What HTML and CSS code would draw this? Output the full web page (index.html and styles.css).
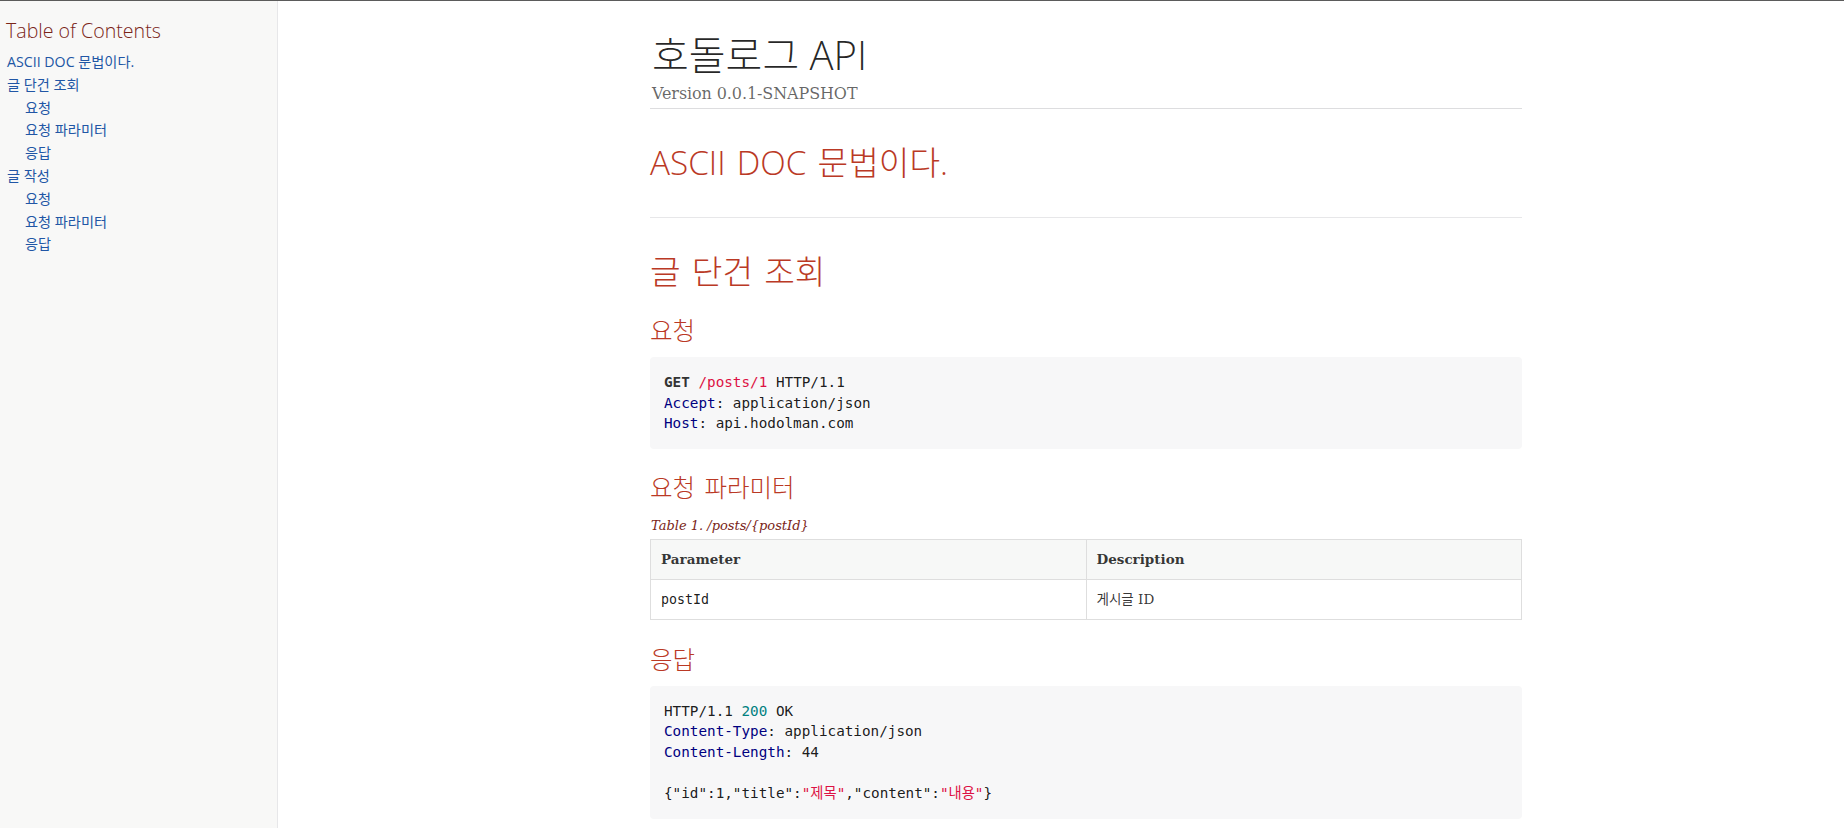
FILE: index.html
```html
<!DOCTYPE html>
<html lang="ko">
<head>
<meta charset="utf-8">
<title>호돌로그 API</title>
<link rel="stylesheet" href="styles.css">
</head>
<body>
<div class="page">
  <nav class="toc">
    <div class="toc-title">Table of Contents</div>
    <ul class="toc-list">
      <li><a href="#a">ASCII DOC 문법이다.</a></li>
      <li><a href="#b">글 단건 조회</a>
        <ul class="toc-sub">
          <li><a href="#b1">요청</a></li>
          <li><a href="#b2">요청 파라미터</a></li>
          <li><a href="#b3">응답</a></li>
        </ul>
      </li>
      <li><a href="#c">글 작성</a>
        <ul class="toc-sub">
          <li><a href="#c1">요청</a></li>
          <li><a href="#c2">요청 파라미터</a></li>
          <li><a href="#c3">응답</a></li>
        </ul>
      </li>
    </ul>
  </nav>
  <main class="main">
    <div class="content">
      <header class="header">
        <h1 class="doc-title">호돌로그 API</h1>
        <div class="details">Version 0.0.1-SNAPSHOT</div>
      </header>
      <section class="sect1 sect-first" id="a">
        <h2 class="h2">ASCII DOC 문법이다.</h2>
      </section>
      <section class="sect1 sect-next" id="b">
        <h2 class="h2">글 단건 조회</h2>
        <h3 class="h3 h3-first" id="b1">요청</h3>
        <pre class="listing"><span class="kw">GET</span> <span class="str">/posts/1</span> HTTP/1.1
<span class="attr">Accept</span>: application/json
<span class="attr">Host</span>: api.hodolman.com</pre>
        <h3 class="h3" id="b2">요청 파라미터</h3>
        <div class="caption">Table 1. /posts/{postId}</div>
        <table class="params">
          <thead>
            <tr><th class="cell">Parameter</th><th class="cell">Description</th></tr>
          </thead>
          <tbody>
            <tr><td class="cell"><code class="mono">postId</code></td><td class="cell">게시글 ID</td></tr>
          </tbody>
        </table>
        <h3 class="h3 h3-resp" id="b3">응답</h3>
        <pre class="listing">HTTP/1.1 <span class="num">200</span> OK
<span class="attr">Content-Type</span>: application/json
<span class="attr">Content-Length</span>: 44

{"id":1,"title":<span class="str">"제목"</span>,"content":<span class="str">"내용"</span>}</pre>
      </section>
    </div>
  </main>
</div>
</body>
</html>
```

FILE: styles.css
```css
* { box-sizing: border-box; }

html, body {
  margin: 0;
  padding: 0;
  background: #fff;
}

body {
  border-top: 1px solid #5b5b5b;
  font-family: "DejaVu Serif", "Noto Sans CJK KR", serif;
  color: rgba(0, 0, 0, 0.8);
  overflow: hidden;
}

.page {
  display: flex;
  height: 827px;
}

/* ---------- TOC sidebar ---------- */
.toc {
  flex: 0 0 278px;
  width: 278px;
  background: #f8f8f7;
  border-right: 1px solid #e7e7e9;
  padding: 18px 6px 0 6px;
}

.toc-title {
  font-family: "Open Sans", "Noto Sans CJK KR", sans-serif;
  font-weight: 300;
  font-size: 19.6px;
  line-height: 24px;
  color: #7a2518;
}

.toc-list, .toc-sub {
  list-style: none;
  margin: 0;
  padding: 0;
}

.toc-list {
  margin-top: 8px;
  font-family: "Open Sans", "Noto Sans CJK KR", sans-serif;
  font-size: 14.2px;
  line-height: 22.8px;
}

.toc-list > li {
  padding-left: 1px;
}

.toc-sub {
  padding-left: 18px;
}

.toc a {
  color: #2156a5;
  text-decoration: none;
}

/* ---------- main content ---------- */
.main {
  flex: 1 1 auto;
  min-width: 0;
}

.content {
  width: 872px;
  margin-left: 372px;
}

.header {
  padding-top: 30px;
  border-bottom: 1px solid #dddddf;
  padding-bottom: 4px;
}

.doc-title {
  margin: 0;
  font-family: "Open Sans", "Noto Sans CJK KR", sans-serif;
  font-weight: 300;
  font-size: 40px;
  line-height: 48px;
  color: rgba(0, 0, 0, 0.85);
  padding-left: 2px;
}

.details {
  margin-top: 5px;
  font-size: 16px;
  line-height: 20px;
  letter-spacing: -0.1px;
  color: rgba(0, 0, 0, 0.6);
  padding-left: 2px;
}

.sect-first {
  padding-bottom: 35px;
}

.sect-next {
  border-top: 1px solid #e7e7e9;
}

.h2 {
  margin: 33px 0 0 0;
  font-family: "Open Sans", "Noto Sans CJK KR", sans-serif;
  font-weight: 300;
  font-size: 33.3px;
  line-height: 40px;
  word-spacing: 2.5px;
  color: #ba3925;
}

.h3 {
  margin: 24px 0 0 0;
  font-family: "Open Sans", "Noto Sans CJK KR", sans-serif;
  font-weight: 300;
  font-size: 24.5px;
  line-height: 29px;
  word-spacing: 3px;
  color: #ba3925;
}

.h3-first {
  margin-top: 25px;
}

.h3-resp {
  margin-top: 25px;
}

.listing {
  margin: 12px 0 0 0;
  background: #f7f7f8;
  border-radius: 4px;
  padding: 15px 14px;
  font-family: "DejaVu Sans Mono", "Noto Sans CJK KR", monospace;
  font-size: 14.3px;
  line-height: 20.6px;
  color: rgba(0, 0, 0, 0.9);
  white-space: pre;
}

.kw {
  font-weight: bold;
  color: #333;
}

.str {
  color: #dd1144;
}

.attr {
  color: #000080;
}

.num {
  color: #008080;
}

.caption {
  margin-top: 14px;
  font-style: italic;
  font-size: 13px;
  line-height: 20px;
  color: #7a2518;
  padding-left: 1px;
}

.params {
  margin-top: 3px;
  width: 100%;
  border-collapse: collapse;
  table-layout: fixed;
  border: 1px solid #dedede;
}

.cell {
  width: 50%;
  border: 1px solid #dedede;
  padding: 9px 10px;
  line-height: 21px;
  text-align: left;
  vertical-align: top;
  font-size: 13.5px;
  color: rgba(0, 0, 0, 0.8);
}

thead .cell {
  background: #f7f8f7;
  font-weight: bold;
}

.mono {
  font-family: "DejaVu Sans Mono", monospace;
  font-size: 13.3px;
  color: rgba(0, 0, 0, 0.9);
}
```
